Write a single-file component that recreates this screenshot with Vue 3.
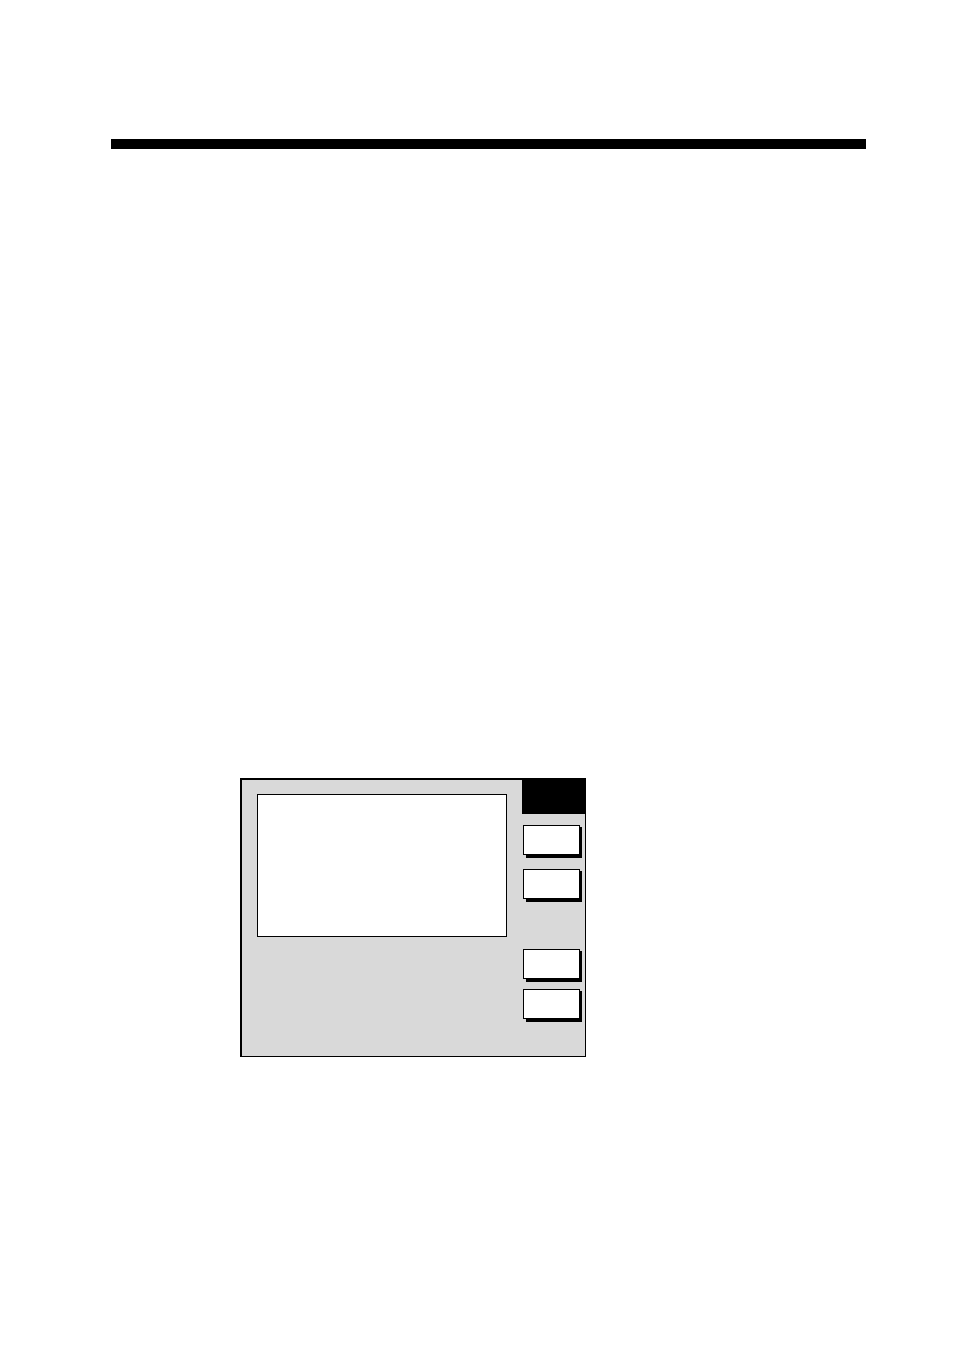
<template>
  <main class="page">
    <hr class="rule" />

    <section class="panel">
      <div class="display"></div>

      <div class="side">
        <div class="title"></div>
        <div
          v-for="group in keyGroups"
          :key="group.name"
          :class="['keys', group.name]"
        >
          <button
            v-for="key in group.keys"
            :key="key"
            type="button"
            class="key"
            :aria-label="`Soft key ${key}`"
          ></button>
        </div>
      </div>
    </section>
  </main>
</template>

<script setup>
const keyGroups = [
  { name: 'upper', keys: [1, 2] },
  { name: 'lower', keys: [3, 4] }
];
</script>

<style>
body {
  margin: 0;
  background: #ffffff;
}
</style>

<style scoped>
.page {
  display: flex;
  flex-direction: column;
  padding: 139px 88px 40px 111px;
  font-family: "Liberation Sans", Arial, sans-serif;
}

.rule {
  width: 100%;
  height: 10px;
  margin: 0;
  border: none;
  background: #000000;
}

.panel {
  box-sizing: border-box;
  display: flex;
  align-items: flex-start;
  width: 100%;
  max-width: 346px;
  margin: 629px 0 0 129px;
  border: 1px solid #000000;
  border-top-width: 2px;
  border-left-width: 2px;
  background: #d9d9d9;
}

.display {
  box-sizing: border-box;
  flex: 1;
  height: 143px;
  margin: 14px 15px 0;
  border: 1px solid #000000;
  background: #ffffff;
}

.side {
  width: 63px;
  padding-bottom: 37px;
}

.title {
  height: 34px;
  background: #000000;
}

/* Own stacking context, so the key shadows stay above the panel */
.keys {
  display: flex;
  flex-direction: column;
  padding: 0 5px 0 1px;
  isolation: isolate;
}

.upper {
  gap: 14px;
  margin-top: 11px;
}

.lower {
  gap: 10px;
  margin-top: 50px;
}

.key {
  position: relative;
  box-sizing: border-box;
  height: 30px;
  padding: 0;
  border: 1px solid #000000;
  border-radius: 0;
  background: #ffffff;
  cursor: pointer;
}

/* Hard drop shadow behind the key */
.key::after {
  content: '';
  position: absolute;
  inset: 1px -3px -4px 2px;
  z-index: -1;
  background: #000000;
}
</style>
